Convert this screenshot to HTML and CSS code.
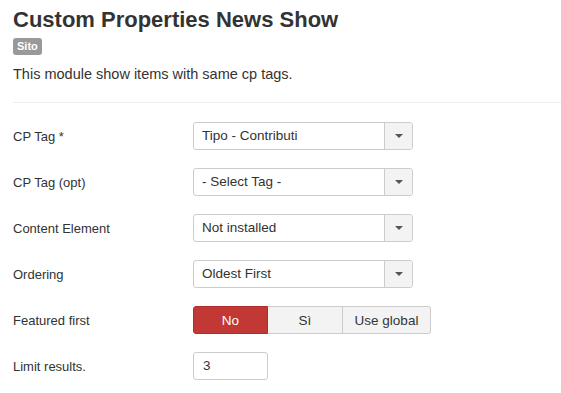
FILE: index.html
```html
<!DOCTYPE html>
<html lang="en">
<head>
    <meta charset="UTF-8">
    <meta name="viewport" content="width=device-width, initial-scale=1.0">
    <title>Custom Properties News Show</title>
    <link rel="stylesheet" href="styles.css">
</head>
<body>
    <div class="module">
        <h1 class="title">Custom Properties News Show</h1>
        <span class="badge">Sito</span>
        <p class="desc">This module show items with same cp tags.</p>
        <hr class="sep">

        <div class="form">
            <div class="control-group">
                <div class="control-label">CP Tag *</div>
                <div class="select"><span class="selvalue">Tipo - Contributi</span><span class="selarrow"><b class="caret"></b></span></div>
            </div>
            <div class="control-group">
                <div class="control-label">CP Tag (opt)</div>
                <div class="select"><span class="selvalue">- Select Tag -</span><span class="selarrow"><b class="caret"></b></span></div>
            </div>
            <div class="control-group">
                <div class="control-label">Content Element</div>
                <div class="select"><span class="selvalue">Not installed</span><span class="selarrow"><b class="caret"></b></span></div>
            </div>
            <div class="control-group">
                <div class="control-label">Ordering</div>
                <div class="select"><span class="selvalue">Oldest First</span><span class="selarrow"><b class="caret"></b></span></div>
            </div>
            <div class="control-group">
                <div class="control-label">Featured first</div>
                <div class="btngroup">
                    <span class="btn btn-no">No</span>
                    <span class="btn btn-si">Sì</span>
                    <span class="btn btn-global">Use global</span>
                </div>
            </div>
            <div class="control-group">
                <div class="control-label">Limit results.</div>
                <div class="textinput">3</div>
            </div>
        </div>
    </div>
</body>
</html>
```

FILE: styles.css
```css
body {
    margin: 0;
    font-family: "Liberation Sans", Arial, sans-serif;
    color: #333333;
    background: #ffffff;
}

.module {
    padding: 8px 0 0 13px;
}

.title {
    font-size: 22px;
    font-weight: bold;
    margin: 0;
    line-height: 24px;
}

.badge {
    display: inline-block;
    margin-top: 6px;
    background: #999999;
    color: #ffffff;
    font-size: 11px;
    font-weight: bold;
    line-height: 17px;
    padding: 0 4px;
    border-radius: 3px;
}

.desc {
    font-size: 14.5px;
    margin: 10px 0 0;
    line-height: 18px;
}

.sep {
    border: 0;
    border-top: 1px solid #eeeeee;
    margin: 19px 0 0;
}

.form {
    padding-top: 19px;
}

.control-group {
    display: flex;
    align-items: center;
    height: 28px;
    margin-bottom: 18px;
}

.control-label {
    width: 180px;
    font-size: 13px;
}

.select {
    display: flex;
    width: 218px;
    height: 26px;
    border: 1px solid #cccccc;
    border-radius: 3px;
    font-size: 13.5px;
    overflow: hidden;
}

.selvalue {
    flex: 1;
    padding-left: 8px;
    line-height: 26px;
}

.selarrow {
    width: 27px;
    border-left: 1px solid #cccccc;
    background: #f3f3f3;
    display: flex;
    align-items: center;
    justify-content: center;
}

.caret {
    width: 0;
    height: 0;
    border-left: 4px solid transparent;
    border-right: 4px solid transparent;
    border-top: 4px solid #555555;
}

.btngroup {
    display: flex;
    height: 28px;
}

.btn {
    display: flex;
    align-items: center;
    justify-content: center;
    font-size: 13.5px;
    background: #f3f3f3;
    border: 1px solid #cccccc;
    border-left: 0;
    box-sizing: border-box;
}

.btn-no {
    width: 75px;
    background: #c23834;
    border: 1px solid #b12d29;
    color: #ffffff;
    border-radius: 3px 0 0 3px;
}

.btn-si {
    width: 75px;
}

.btn-global {
    width: 88px;
    border-radius: 0 3px 3px 0;
}

.textinput {
    width: 64px;
    height: 26px;
    line-height: 26px;
    border: 1px solid #cccccc;
    border-radius: 3px;
    font-size: 13.5px;
    padding-left: 9px;
}
```
